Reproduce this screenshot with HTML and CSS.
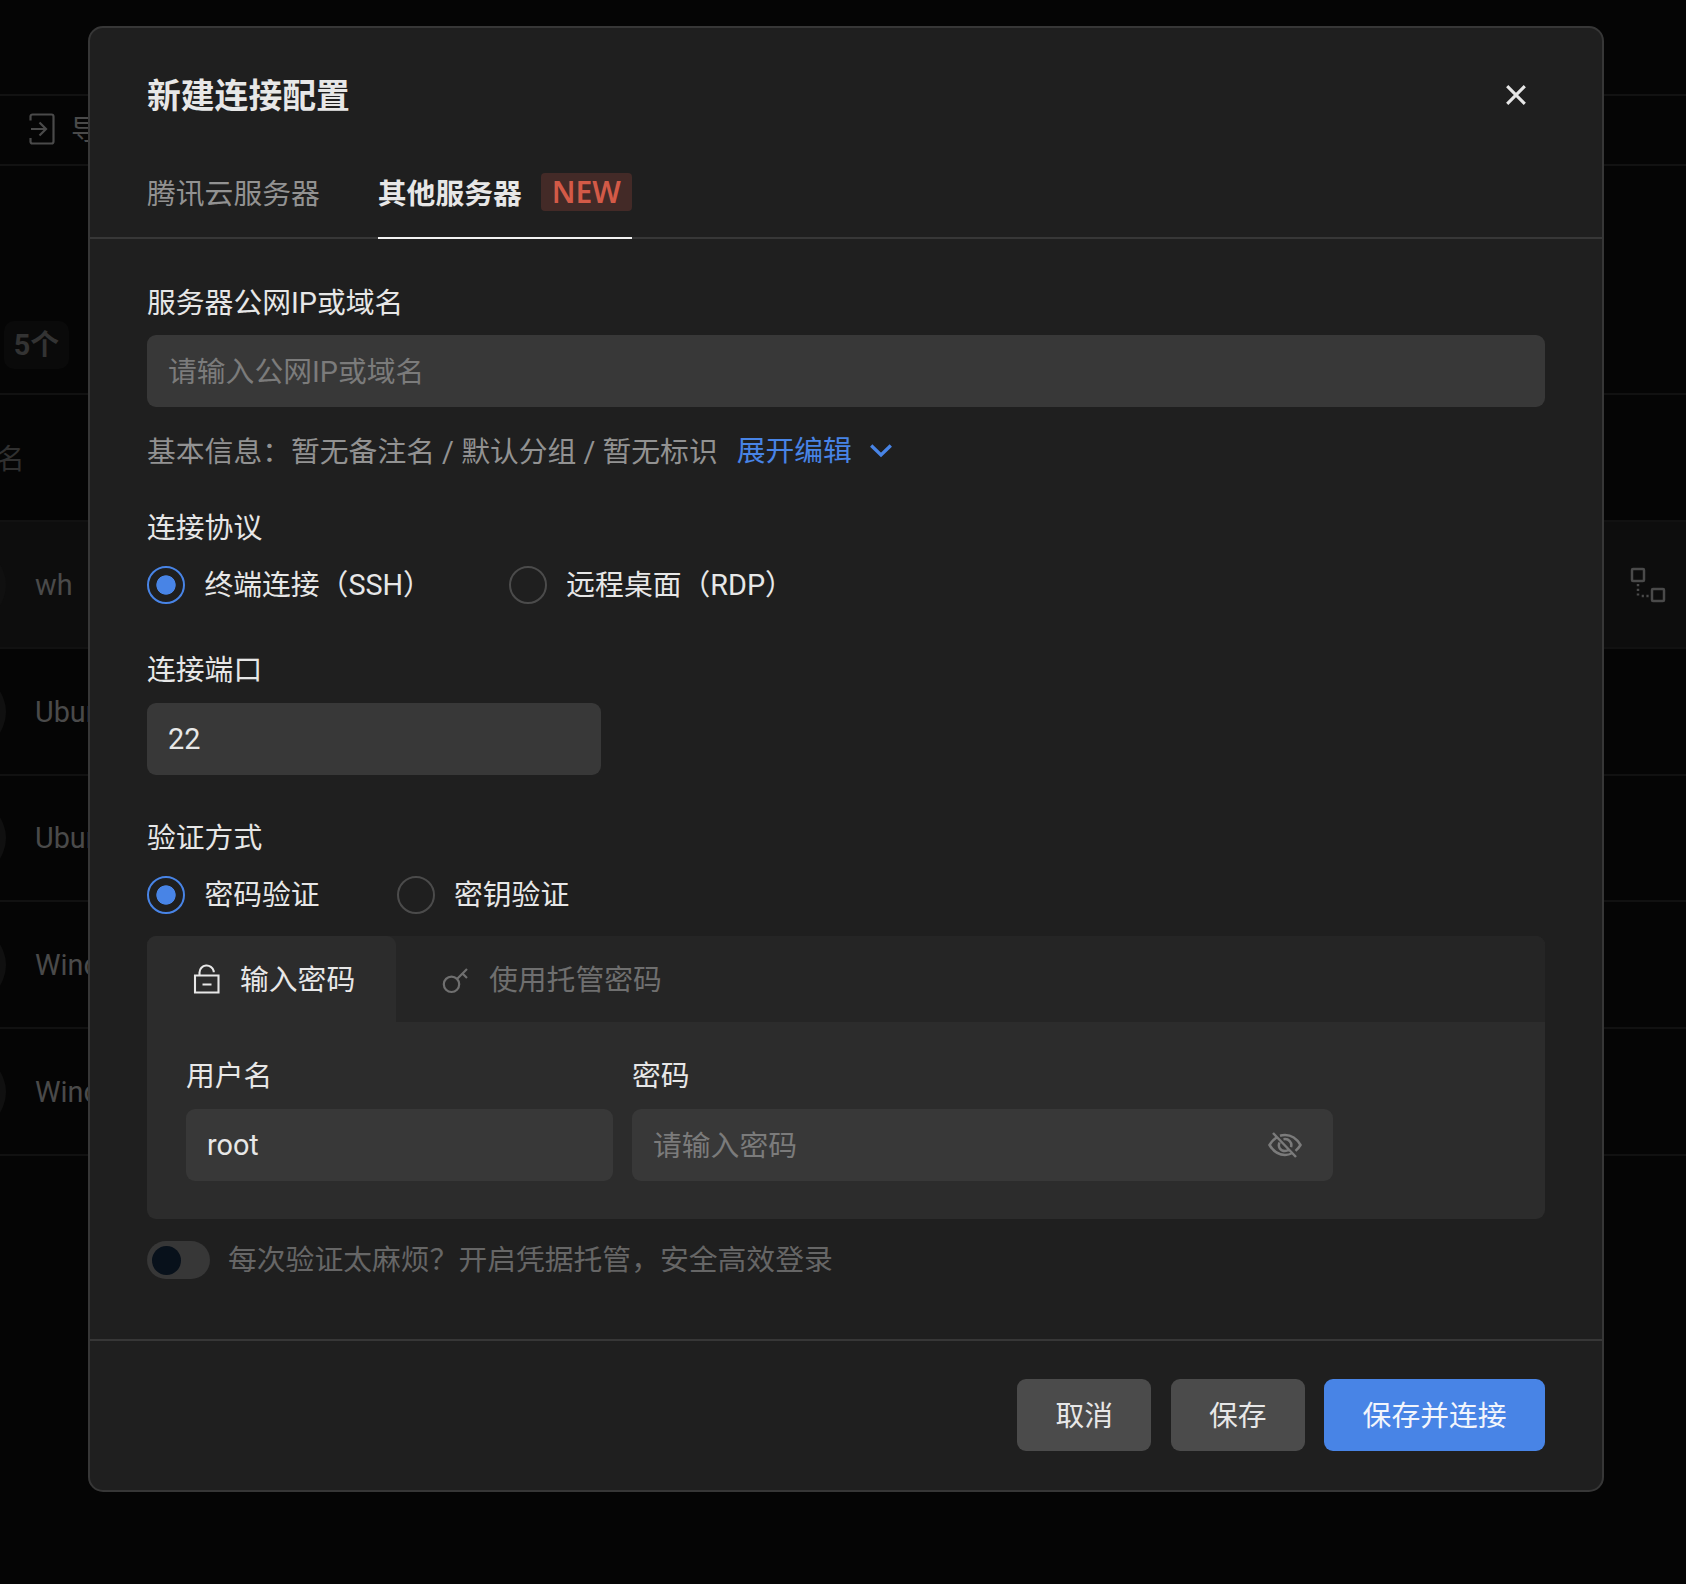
FILE: index.html
```html
<!DOCTYPE html>
<html lang="zh-CN">
<head>
<meta charset="utf-8">
<title>新建连接配置</title>
<link rel="stylesheet" href="styles.css">
</head>
<body>
<div class="page">
  <div class="toolbar">
    <svg class="import-icon" viewBox="0 0 26 32" fill="none" stroke="currentColor" stroke-width="2.200"><path d="M1.500 7.500V3.500a2 2 0 0 1 2-2h19a2 2 0 0 1 2 2v25a2 2 0 0 1-2 2h-19a2 2 0 0 1-2-2V25M2 16h15M10.500 9.500l6.500 6.500-6.500 6.500"/></svg>
    <span>导入</span>
  </div>
  <div class="summary"><span class="count">5个</span></div>
  <div class="table">
    <div class="thead"><span>名</span></div>
    <div class="row active"><i class="avatar"></i><span>wh</span>
      <svg class="link-icon" viewBox="0 0 36 36" fill="none" stroke="currentColor" stroke-width="2.500"><rect x="2" y="2" width="12" height="12" rx="1"/><rect x="22" y="22" width="12" height="12" rx="1"/><path stroke-dasharray="2.200 2.500" d="M8 17v13.500M11.700 29h9"/></svg>
    </div>
    <div class="row"><i class="avatar"></i><span>Ubuntu</span></div>
    <div class="row"><i class="avatar"></i><span>Ubuntu</span></div>
    <div class="row"><i class="avatar"></i><span>Windows</span></div>
    <div class="row"><i class="avatar"></i><span>Windows</span></div>
  </div>
</div>

<div class="modal">
  <header class="modal-head">
    <h1>新建连接配置</h1>
    <svg class="close" viewBox="0 0 20 20" fill="none" stroke="currentColor" stroke-width="3.100"><path d="M1.200 1.200l17.600 17.600M18.800 1.200L1.200 18.800"/></svg>
  </header>
  <nav class="tabs">
    <a class="tab">腾讯云服务器</a>
    <a class="tab current">其他服务器<b class="new">NEW</b></a>
  </nav>
  <main class="body">
    <div class="label">服务器公网IP或域名</div>
    <div class="input hint">请输入公网IP或域名</div>
    <div class="info">基本信息：暂无备注名 / 默认分组 / 暂无标识<a class="expand">展开编辑<svg viewBox="0 0 22 14" fill="none" stroke="currentColor" stroke-width="3.300"><path d="M1.200 1.500L11 11l9.800-9.500"/></svg></a></div>
    <div class="label protocol">连接协议</div>
    <div class="radios">
      <span class="radio checked">终端连接（SSH）</span>
      <span class="radio second">远程桌面（RDP）</span>
    </div>
    <div class="label port">连接端口</div>
    <div class="input port-input">22</div>
    <div class="label auth">验证方式</div>
    <div class="radios">
      <span class="radio checked">密码验证</span>
      <span class="radio third">密钥验证</span>
    </div>
    <section class="panel">
      <div class="panel-tabs">
        <div class="panel-tab on"><svg class="lock" viewBox="0 0 27 30" fill="none" stroke="currentColor" stroke-width="2.100"><path d="M2 11.500h23.500v17H2zM6.500 11.500V8.500a7.200 7.200 0 0 1 14.200-1.500v1.300M9.500 20.500h9"/></svg>输入密码</div>
        <div class="panel-tab"><svg class="key" viewBox="0 0 26 26" fill="none" stroke="currentColor" stroke-width="2.200"><circle cx="9.500" cy="17.300" r="7.700"/><path d="M15 12L25 2M20.500 6.500l4.500 4.500"/></svg>使用托管密码</div>
      </div>
      <div class="credentials">
        <div class="user"><div class="label">用户名</div><div class="input">root</div></div>
        <div class="password"><div class="label">密码</div><div class="input hint"><span>请输入密码</span>
          <svg class="eye" viewBox="0 0 34 26" fill="none" stroke="currentColor" stroke-width="2.500"><path d="M8.500 4.500C5.500 6.500 3 9.500 1.500 12c3.500 6 9.500 10 15.500 10 2.500 0 5-.700 7.500-2M12 2.700C13.500 2.200 15.200 2 17 2c6 0 12 4 15.500 10-1.300 2.200-3 4.200-5 5.900M11.500 9.500C9.500 14 12.500 18 17 18c1.500 0 2.700-.500 3.700-1.200M15.500 6.200c5-1 9 3.300 7.500 8M5 0l23 24"/></svg></div></div>
      </div>
    </section>
    <div class="hosting"><i class="switch"></i>每次验证太麻烦？开启凭据托管，安全高效登录</div>
  </main>
  <footer class="foot"><span class="btn">取消</span><span class="btn">保存</span><span class="btn primary">保存并连接</span></footer>
</div>
</body>
</html>
```

FILE: styles.css
```css
*, *::before { box-sizing: border-box; }

body {
  margin: 0;
  width: 1686px;
  height: 1584px;
  overflow: hidden;
  position: relative;
  background: #050505;
  color: #e7e7e7;
  font: 28.8px/40px Roboto, "Noto Sans CJK SC", sans-serif;
}

svg { display: block; flex: none; overflow: visible; }

/* dimmed page behind the dialog */
.page { padding-top: 94px; color: #4a4a4a; }

.toolbar {
  height: 72px;
  border-top: 2px solid #121212;
  border-bottom: 2px solid #121212;
  display: flex;
  align-items: center;
  gap: 16px;
  padding-left: 29px;
}
.import-icon { width: 26px; height: 32px; margin-top: -2px; }

.summary { height: 227px; padding: 155px 0 0 4px; }
.count {
  display: block;
  width: 65px;
  height: 48px;
  line-height: 48px;
  border-radius: 10px;
  background: #0a0a0a;
  color: #333;
  font-weight: 700;
  text-align: center;
}

.table { border-top: 2px solid #111; }
.thead {
  height: 127px;
  display: flex;
  align-items: center;
  padding-top: 3px;
  color: #303030;
  border-bottom: 2px solid #111;
}
.thead span { margin-left: -4px; }

.row {
  height: 126.800px;
  display: flex;
  align-items: center;
  padding-top: 1px;
  border-bottom: 2px solid #111;
}
.row.active { background: #0d0d0d; }
.avatar {
  width: 76px;
  height: 76px;
  margin: 0 29px 0 -70px;
  border-radius: 50%;
  background: #101010;
}
.link-icon { width: 36px; height: 36px; margin-left: auto; margin-right: 20px; }

.modal {
  position: absolute;
  left: 88px;
  top: 26px;
  width: 1516px;
  height: 1466px;
  border: 2px solid #373737;
  border-radius: 15px;
  background: #1f1f1f;
  display: flex;
  flex-direction: column;
}

.modal-head {
  display: flex;
  justify-content: space-between;
  align-items: center;
  padding: 47px 76px 0 57px;
}
h1 { margin: 0; padding-top: 4px; font-size: 33.8px; line-height: 36px; font-weight: 700; }
.close { width: 20px; height: 20px; }

.tabs {
  height: 124px;
  padding: 0 57px;
  display: flex;
  align-items: flex-end;
  gap: 58px;
  border-bottom: 2px solid #373737;
}
.tab {
  height: 82px;
  padding-top: 17px;
  line-height: 40px;
  margin-bottom: -2px;
  color: #929292;
  display: flex;
}
.current { color: #e7e7e7; font-weight: 700; border-bottom: 2px solid #f2f2f2; }
.new {
  width: 91px;
  height: 38px;
  margin: -1px 0 0 19px;
  border-radius: 4px;
  background: #432a27;
  color: #d35a47;
  font: 600 30px/38px "Noto Sans", "Open Sans", sans-serif;
  text-align: center;
}

.body { flex: 1; padding: 43px 57px 0; }

.label { height: 40px; padding-top: 1px; }
.input {
  height: 72px;
  margin-top: 13px;
  padding: 0 21px;
  border-radius: 9px;
  background: #383838;
  display: flex;
  align-items: center;
  justify-content: space-between;
}
.hint { color: #7b7b7b; padding-top: 1px; }

.info { margin-top: 24px; padding-top: 1px; color: #929292; display: flex; height: 40px; }
.expand {
  color: #4884e6;
  display: flex;
  align-items: center;
  gap: 18px;
  margin: -1px 0 0 19px;
}
.expand svg { width: 22px; height: 14px; }

.protocol { margin-top: 36px; }
.radios { display: flex; margin-top: 18px; }
.radio { display: flex; align-items: center; gap: 19px; height: 40px; }
.radio::before {
  content: "";
  width: 38.400px;
  height: 38.400px;
  flex: none;
  border: 2px solid #4b4b4b;
  border-radius: 50%;
}
.checked::before {
  border-color: #4884e6;
  background: radial-gradient(circle, #4884e6 9.300px, transparent 10px);
}
.second { margin-left: 77px; }
.third { margin-left: 77px; }

.port { margin-top: 44px; }
.port-input { width: 454px; margin-top: 14px; }
.auth { margin-top: 42px; }

.panel {
  height: 283px;
  margin-top: 21px;
  border-radius: 9px;
  background: #2c2c2c;
  overflow: hidden;
}
.panel-tabs { height: 86px; display: flex; background: #252525; }
.panel-tab {
  display: flex;
  align-items: center;
  gap: 21px;
  padding: 1px 0 0 46px;
  color: #6f6f6f;
}
.on {
  width: 249px;
  gap: 20px;
  color: #e7e7e7;
  background: #2c2c2c;
  border-top-right-radius: 9px;
}
.lock { width: 27px; height: 30px; margin-top: -2px; }
.key { width: 26px; height: 26px; }

.credentials { display: flex; gap: 19px; padding: 33px 39px; }
.user { width: 427px; }
.password { width: 701px; }
.credentials .input { margin-top: 14px; }
.password .input { padding-right: 31px; }
.eye { width: 34px; height: 26px; }

.hosting {
  display: flex;
  align-items: center;
  height: 40px;
  gap: 18px;
  margin-top: 21px;
  color: #666;
}
.switch {
  width: 63px;
  height: 38px;
  padding: 4.500px 5px;
  border-radius: 19px;
  background: #373737;
}
.switch::before {
  content: "";
  display: block;
  width: 29px;
  height: 29px;
  border-radius: 50%;
  background: #08111b;
}

.foot {
  height: 151px;
  padding: 38px 57px;
  display: flex;
  justify-content: flex-end;
  gap: 19.200px;
  border-top: 2px solid #373737;
}
.btn {
  height: 72px;
  line-height: 74px;
  padding: 0 38.400px;
  border-radius: 9px;
  background: #4b4b4b;
}
.primary { background: #4884e6; color: #f2f5fc; }
```
